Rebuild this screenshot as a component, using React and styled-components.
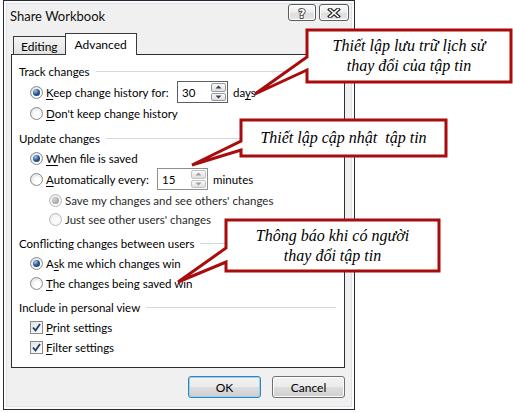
import React from "react";
import styled, { createGlobalStyle } from "styled-components";

const GlobalStyle = createGlobalStyle`
  body {
    margin: 0;
    background: #ffffff;
    font-family: Lato, "Noto Sans", sans-serif;
    font-size: 11.5px;
    color: #000;
  }
`;

const Page = styled.div`
  position: relative;
  width: 513px;
  height: 413px;
  padding-left: 3px;
  box-sizing: border-box;
  overflow: hidden;
  white-space: nowrap;
`;

const Dialog = styled.div`
  width: 352px;
  height: 410px;
  box-sizing: border-box;
  border: 1px solid #2b2b2b;
  background: #f0f0f0;
  box-shadow: inset 0 0 0 2px #f9fbfd, inset 0 0 0 3px #dbe3ec;
  display: flex;
  flex-direction: column;
`;

const TitleBar = styled.div`
  height: 32px;
  flex: none;
  display: flex;
  align-items: flex-start;
  justify-content: space-between;
  padding: 0 5px 0 6px;
`;

const Title = styled.span`
  margin-top: 7px;
  font-size: 13px;
  color: #111;
`;

const CaptionButtons = styled.div`
  display: flex;
  gap: 3px;
  margin-top: 3px;
`;

const CaptionButton = styled.div`
  width: ${(p) => p.$w}px;
  height: 17px;
  box-sizing: border-box;
  border: 1px solid #5b5b5b;
  border-radius: 3px;
  background: linear-gradient(#fbfbfb 0%, #ececec 50%, #dcdcdc 51%, #e6e6e6 100%);
  box-shadow: inset 0 0 0 1px #ffffff;
  display: flex;
  align-items: center;
  justify-content: center;
`;

const Body = styled.div`
  flex: 1;
  display: flex;
  flex-direction: column;
  padding: 0 9px 0 7px;
`;

const TabStrip = styled.div`
  height: 22px;
  display: flex;
  align-items: flex-end;
  padding-left: 2px;
  margin-bottom: -1px;
  position: relative;
  z-index: 1;
`;

const Tab = styled.div`
  height: ${(p) => (p.$active ? 22 : 19)}px;
  box-sizing: border-box;
  padding: ${(p) => (p.$active ? "0 9px" : "2px 7px 0")};
  border: 1px solid #3a3a3a;
  border-bottom: ${(p) => (p.$active ? "none" : "1px solid #3a3a3a")};
  background: ${(p) =>
    p.$active ? "#ffffff" : "linear-gradient(#f4f4f4, #e3e3e3)"};
  display: flex;
  align-items: center;
  font-size: 12px;
  margin-left: ${(p) => (p.$active ? -1 : 0)}px;
`;

const Panel = styled.div`
  background: #ffffff;
  border: 1px solid #2e2e2e;
  padding: 2px 0 10px;
  display: flex;
  flex-direction: column;
`;

const GroupHeader = styled.div`
  height: 20px;
  margin-top: 4px;
  display: flex;
  align-items: center;
  padding: 0 8px 0 7px;
  &::after {
    content: "";
    flex: 1;
    height: 1px;
    margin-left: 6px;
    background: #d2d8de;
  }
`;

const OptionRow = styled.div`
  height: ${(p) => p.$h || 20}px;
  display: flex;
  align-items: center;
  padding-left: ${(p) => p.$indent}px;
  color: ${(p) => (p.$muted ? "#2a2a2a" : "#000")};
`;

const Radio = styled.span`
  position: relative;
  width: 13px;
  height: 13px;
  flex: none;
  box-sizing: border-box;
  border-radius: 50%;
  margin-right: 3px;
  border: 1px solid ${(p) => (p.$disabled ? "#b8b8b8" : "#8a8a8a")};
  background: ${(p) =>
    p.$disabled
      ? "radial-gradient(circle at 60% 65%, #fafafa 0 35%, #e4e4e4 100%)"
      : "radial-gradient(circle at 60% 65%, #ffffff 0 30%, #d4d4d4 100%)"};
  &::after {
    content: "";
    display: ${(p) => (p.$checked ? "block" : "none")};
    position: absolute;
    inset: 2px;
    border-radius: 50%;
    background: ${(p) =>
      p.$disabled
        ? "radial-gradient(circle at 35% 35%, #d6d6d6, #8e8e8e)"
        : "radial-gradient(circle at 35% 30%, #a8c8ee 0, #2c5f9e 45%, #0c2344 100%)"};
  }
`;

const Checkbox = styled.span`
  width: 13px;
  height: 13px;
  flex: none;
  box-sizing: border-box;
  margin-right: 3px;
  border: 1px solid #8a8a8a;
  background: linear-gradient(135deg, #e2e2e2, #ffffff);
  display: flex;
  align-items: center;
  justify-content: center;
`;

const Label = styled.span`
  width: ${(p) => (p.$w ? `${p.$w}px` : "auto")};
  flex: none;
`;

const Key = styled.u`
  text-underline-offset: 2px;
`;

const SpinBox = styled.div`
  width: 51px;
  height: 22px;
  box-sizing: border-box;
  border: 1px solid ${(p) => (p.$disabled ? "#8f8f8f" : "#5f5f5f")};
  background: #ffffff;
  display: flex;
  margin-right: 5px;
`;

const SpinValue = styled.span`
  flex: 1;
  padding-left: 4px;
  display: flex;
  align-items: center;
`;

const SpinButtons = styled.div`
  width: 15px;
  display: flex;
  flex-direction: column;
  padding: 1px 1px 1px 0;
  gap: 1px;
`;

const SpinButton = styled.div`
  flex: 1;
  border: 1px solid ${(p) => (p.$disabled ? "#c4c4c4" : "#9a9a9a")};
  border-radius: 2px;
  background: linear-gradient(#fafafa, #dedede);
  display: flex;
  align-items: center;
  justify-content: center;
`;

const Footer = styled.div`
  display: flex;
  justify-content: flex-end;
  gap: 11px;
  padding-top: 8px;
`;

const PushButton = styled.div`
  width: 73px;
  height: 22px;
  box-sizing: border-box;
  border: 1px solid ${(p) => (p.$default ? "#3c7fb1" : "#707070")};
  border-radius: 3px;
  background: linear-gradient(#f2f2f2 0%, #ebebeb 50%, #dddddd 51%, #cfcfcf 100%);
  box-shadow: inset 0 0 0 1px ${(p) => (p.$default ? "#8fd4f6" : "#fcfcfc")};
  display: flex;
  align-items: center;
  justify-content: center;
  font-size: 12px;
`;

const CalloutBox = styled.div`
  position: absolute;
  left: ${(p) => p.$x}px;
  top: ${(p) => p.$y}px;
  width: ${(p) => p.$w}px;
  height: ${(p) => p.$h}px;
  display: flex;
  align-items: center;
  justify-content: center;
`;

const CalloutShape = styled.svg`
  position: absolute;
  left: 0;
  top: 0;
  overflow: visible;
`;

const CalloutText = styled.div`
  position: relative;
  font-family: "Liberation Serif", "Times New Roman", serif;
  font-style: italic;
  font-size: 16px;
  line-height: 20px;
  text-align: center;
  color: #000;
`;

const Arrow = ({ dir, color }) => (
  <svg width="7" height="4" viewBox="0 0 7 4">
    <path
      d={dir === "up" ? "M0.5 3.5 L3.5 0.5 L6.5 3.5 Z" : "M0.5 0.5 L3.5 3.5 L6.5 0.5 Z"}
      fill={color}
    />
  </svg>
);

const Spin = ({ value, disabled }) => {
  const arrow = disabled ? "#9a9a9a" : "#2a3f5f";
  return (
    <SpinBox $disabled={disabled}>
      <SpinValue>{value}</SpinValue>
      <SpinButtons>
        <SpinButton $disabled={disabled}>
          <Arrow dir="up" color={arrow} />
        </SpinButton>
        <SpinButton $disabled={disabled}>
          <Arrow dir="down" color={arrow} />
        </SpinButton>
      </SpinButtons>
    </SpinBox>
  );
};

const Tick = () => (
  <svg width="9" height="9" viewBox="0 0 9 9">
    <path d="M1 4.5 L3.5 7.5 L8 1" fill="none" stroke="#1d3d72" strokeWidth="1.8" />
  </svg>
);

const HelpGlyph = () => (
  <svg width="10" height="12" viewBox="0 0 10 12">
    <text
      x="5"
      y="10.5"
      textAnchor="middle"
      fontFamily="DejaVu Sans, sans-serif"
      fontWeight="bold"
      fontSize="12"
      fill="#ffffff"
      stroke="#2c2c2c"
      strokeWidth="1.6"
      paintOrder="stroke"
    >
      ?
    </text>
  </svg>
);

const CloseGlyph = () => (
  <svg width="14" height="10" viewBox="0 0 14 10">
    <path d="M3 1.5 L11 8.5 M11 1.5 L3 8.5" stroke="#2c2c2c" strokeWidth="4" strokeLinecap="square" />
    <path d="M3 1.5 L11 8.5 M11 1.5 L3 8.5" stroke="#ffffff" strokeWidth="1.6" strokeLinecap="square" />
  </svg>
);

// box with a pointer coming out of its left side
const Callout = ({ x, y, w, h, base, tip, children }) => {
  const [b1, b2] = base;
  const d = `M0 0 H${w} V${h} H0 V${b2} L${tip[0]} ${tip[1]} L0 ${b1} Z`;
  return (
    <CalloutBox $x={x} $y={y} $w={w} $h={h}>
      <CalloutShape width={w} height={h}>
        <path d={d} fill="#ffffff" stroke="#a80c0c" strokeWidth="3" strokeLinejoin="miter" />
      </CalloutShape>
      <CalloutText>{children}</CalloutText>
    </CalloutBox>
  );
};

const App = () => (
  <Page>
    <GlobalStyle />
    <Dialog>
      <TitleBar>
        <Title>Share Workbook</Title>
        <CaptionButtons>
          <CaptionButton $w={28}>
            <HelpGlyph />
          </CaptionButton>
          <CaptionButton $w={30}>
            <CloseGlyph />
          </CaptionButton>
        </CaptionButtons>
      </TitleBar>
      <Body>
        <TabStrip>
          <Tab>Editing</Tab>
          <Tab $active>Advanced</Tab>
        </TabStrip>
        <Panel>
          <GroupHeader>Track changes</GroupHeader>
          <OptionRow $indent={18} $h={22}>
            <Radio $checked />
            <Label $w={131}>
              <Key>K</Key>eep change history for:
            </Label>
            <Spin value="30" />
            <span>
              da<Key>y</Key>s
            </span>
          </OptionRow>
          <OptionRow $indent={18} $h={21}>
            <Radio />
            <Label>
              <Key>D</Key>on't keep change history
            </Label>
          </OptionRow>

          <GroupHeader>Update changes</GroupHeader>
          <OptionRow $indent={18}>
            <Radio $checked />
            <Label>
              <Key>W</Key>hen file is saved
            </Label>
          </OptionRow>
          <OptionRow $indent={18} $h={22}>
            <Radio />
            <Label $w={111}>
              <Key>A</Key>utomatically every:
            </Label>
            <Spin value="15" disabled />
            <span>minutes</span>
          </OptionRow>
          <OptionRow $indent={37} $muted>
            <Radio $checked $disabled />
            <Label>Save my changes and see others' changes</Label>
          </OptionRow>
          <OptionRow $indent={37} $h={19} $muted>
            <Radio $disabled />
            <Label>Just see other users' changes</Label>
          </OptionRow>

          <GroupHeader>Conflicting changes between users</GroupHeader>
          <OptionRow $indent={18}>
            <Radio $checked />
            <Label>
              A<Key>s</Key>k me which changes win
            </Label>
          </OptionRow>
          <OptionRow $indent={18}>
            <Radio />
            <Label>
              <Key>T</Key>he changes being saved win
            </Label>
          </OptionRow>

          <GroupHeader>Include in personal view</GroupHeader>
          <OptionRow $indent={18}>
            <Checkbox>
              <Tick />
            </Checkbox>
            <Label>
              <Key>P</Key>rint settings
            </Label>
          </OptionRow>
          <OptionRow $indent={18}>
            <Checkbox>
              <Tick />
            </Checkbox>
            <Label>
              <Key>F</Key>ilter settings
            </Label>
          </OptionRow>
        </Panel>
        <Footer>
          <PushButton $default>OK</PushButton>
          <PushButton>Cancel</PushButton>
        </Footer>
      </Body>
    </Dialog>

    <Callout x={307} y={30} w={204} h={52} base={[27, 40]} tip={[-52, 64]}>
      Thiết lập lưu trữ lịch sử
      <br />
      thay đổi của tập tin
    </Callout>
    <Callout x={241} y={120} w={205} h={36} base={[21, 30]} tip={[-49, 45]}>
      Thiết lập cập nhật&nbsp; tập tin
    </Callout>
    <Callout x={226} y={220} w={213} h={51} base={[28, 42]} tip={[-48, 62]}>
      Thông báo khi có người
      <br />
      thay đổi tập tin
    </Callout>
  </Page>
);

export default App;
